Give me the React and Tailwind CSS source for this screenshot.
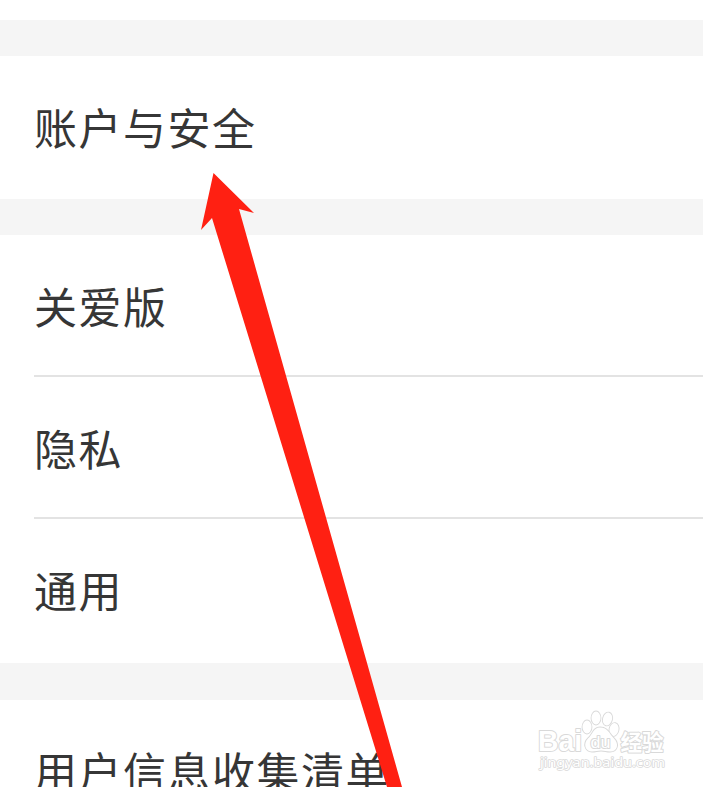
const sections = [
  { gap: 'h-9', rows: [{ label: '账户与安全', height: 'h-[143px] pb-[2px]' }] },
  {
    gap: 'h-9',
    rows: [
      { label: '关爱版', height: 'h-[142px] border-b-2' },
      { label: '隐私', height: 'h-[142px] border-b-2' },
      { label: '通用', height: 'h-[144px] pb-[3px]' },
    ],
  },
  { gap: 'h-[37px]', rows: [{ label: '用户信息收集清单', height: 'h-[142px] pb-[2px]' }] },
];

function Row({ label, height }) {
  return (
    <div className="pl-[34px]">
      <div className={`flex items-center border-[#e3e3e3] text-[43px] leading-none tracking-[1.5px] text-[#363636] ${height}`}>
        <span>{label}</span>
      </div>
    </div>
  );
}

function Watermark() {
  return (
    <svg className="absolute left-[530px] top-[705px] h-[76px] w-[145px]" viewBox="0 0 145 76" fontFamily="Liberation Sans, Noto Sans CJK SC, sans-serif">
      <g fill="#ffffff" stroke="#d9d9d9" strokeWidth="2" strokeLinejoin="round" paintOrder="stroke">
        <text x="8" y="46" fontSize="29" fontWeight="bold" textLength="44" lengthAdjust="spacingAndGlyphs">Bai</text>
        <g strokeWidth="1.8">
          <ellipse cx="57" cy="22" rx="4.500" ry="6.500" />
          <ellipse cx="66" cy="13" rx="4.500" ry="6.500" />
          <ellipse cx="77.500" cy="14" rx="4.500" ry="6.500" transform="rotate(14 77.500 14)" />
          <ellipse cx="84" cy="24.500" rx="4.500" ry="6.500" transform="rotate(12 84 24.500)" />
          <path d="M70 22.500c-7 0-7 7-12 11-5 5-3 13 4 13 4 0 5-1 9-1s5 1 9 1c8 0 9-8 4-13-5-5-6-11-14-11z" />
        </g>
        <text x="60.500" y="42.500" fontSize="17" textLength="20" lengthAdjust="spacingAndGlyphs">du</text>
        <text x="90.500" y="44.500" fontSize="21.500" fontWeight="bold">经验</text>
        <text x="10" y="62" fontSize="13" textLength="125" lengthAdjust="spacingAndGlyphs" fontFamily="Noto Sans, sans-serif" strokeWidth="1.500">jingyan.baidu.com</text>
      </g>
    </svg>
  );
}

export default function App() {
  return (
    <div className="relative h-[787px] w-[703px] overflow-hidden bg-white pt-5 font-['Noto_Sans_CJK_SC',sans-serif]">
      {sections.map(({ gap, rows }) => (
        <section key={rows[0].label}>
          <div className={`bg-[#f5f5f5] ${gap}`} />
          {rows.map((row) => (
            <Row key={row.label} {...row} />
          ))}
        </section>
      ))}
      <Watermark />
      <svg className="absolute inset-0 h-full w-full" viewBox="0 0 703 787">
        <path d="M213.500 173L254 213L239 209L402 787H387L212 218L201 230Z" fill="#ff2012" />
      </svg>
    </div>
  );
}
